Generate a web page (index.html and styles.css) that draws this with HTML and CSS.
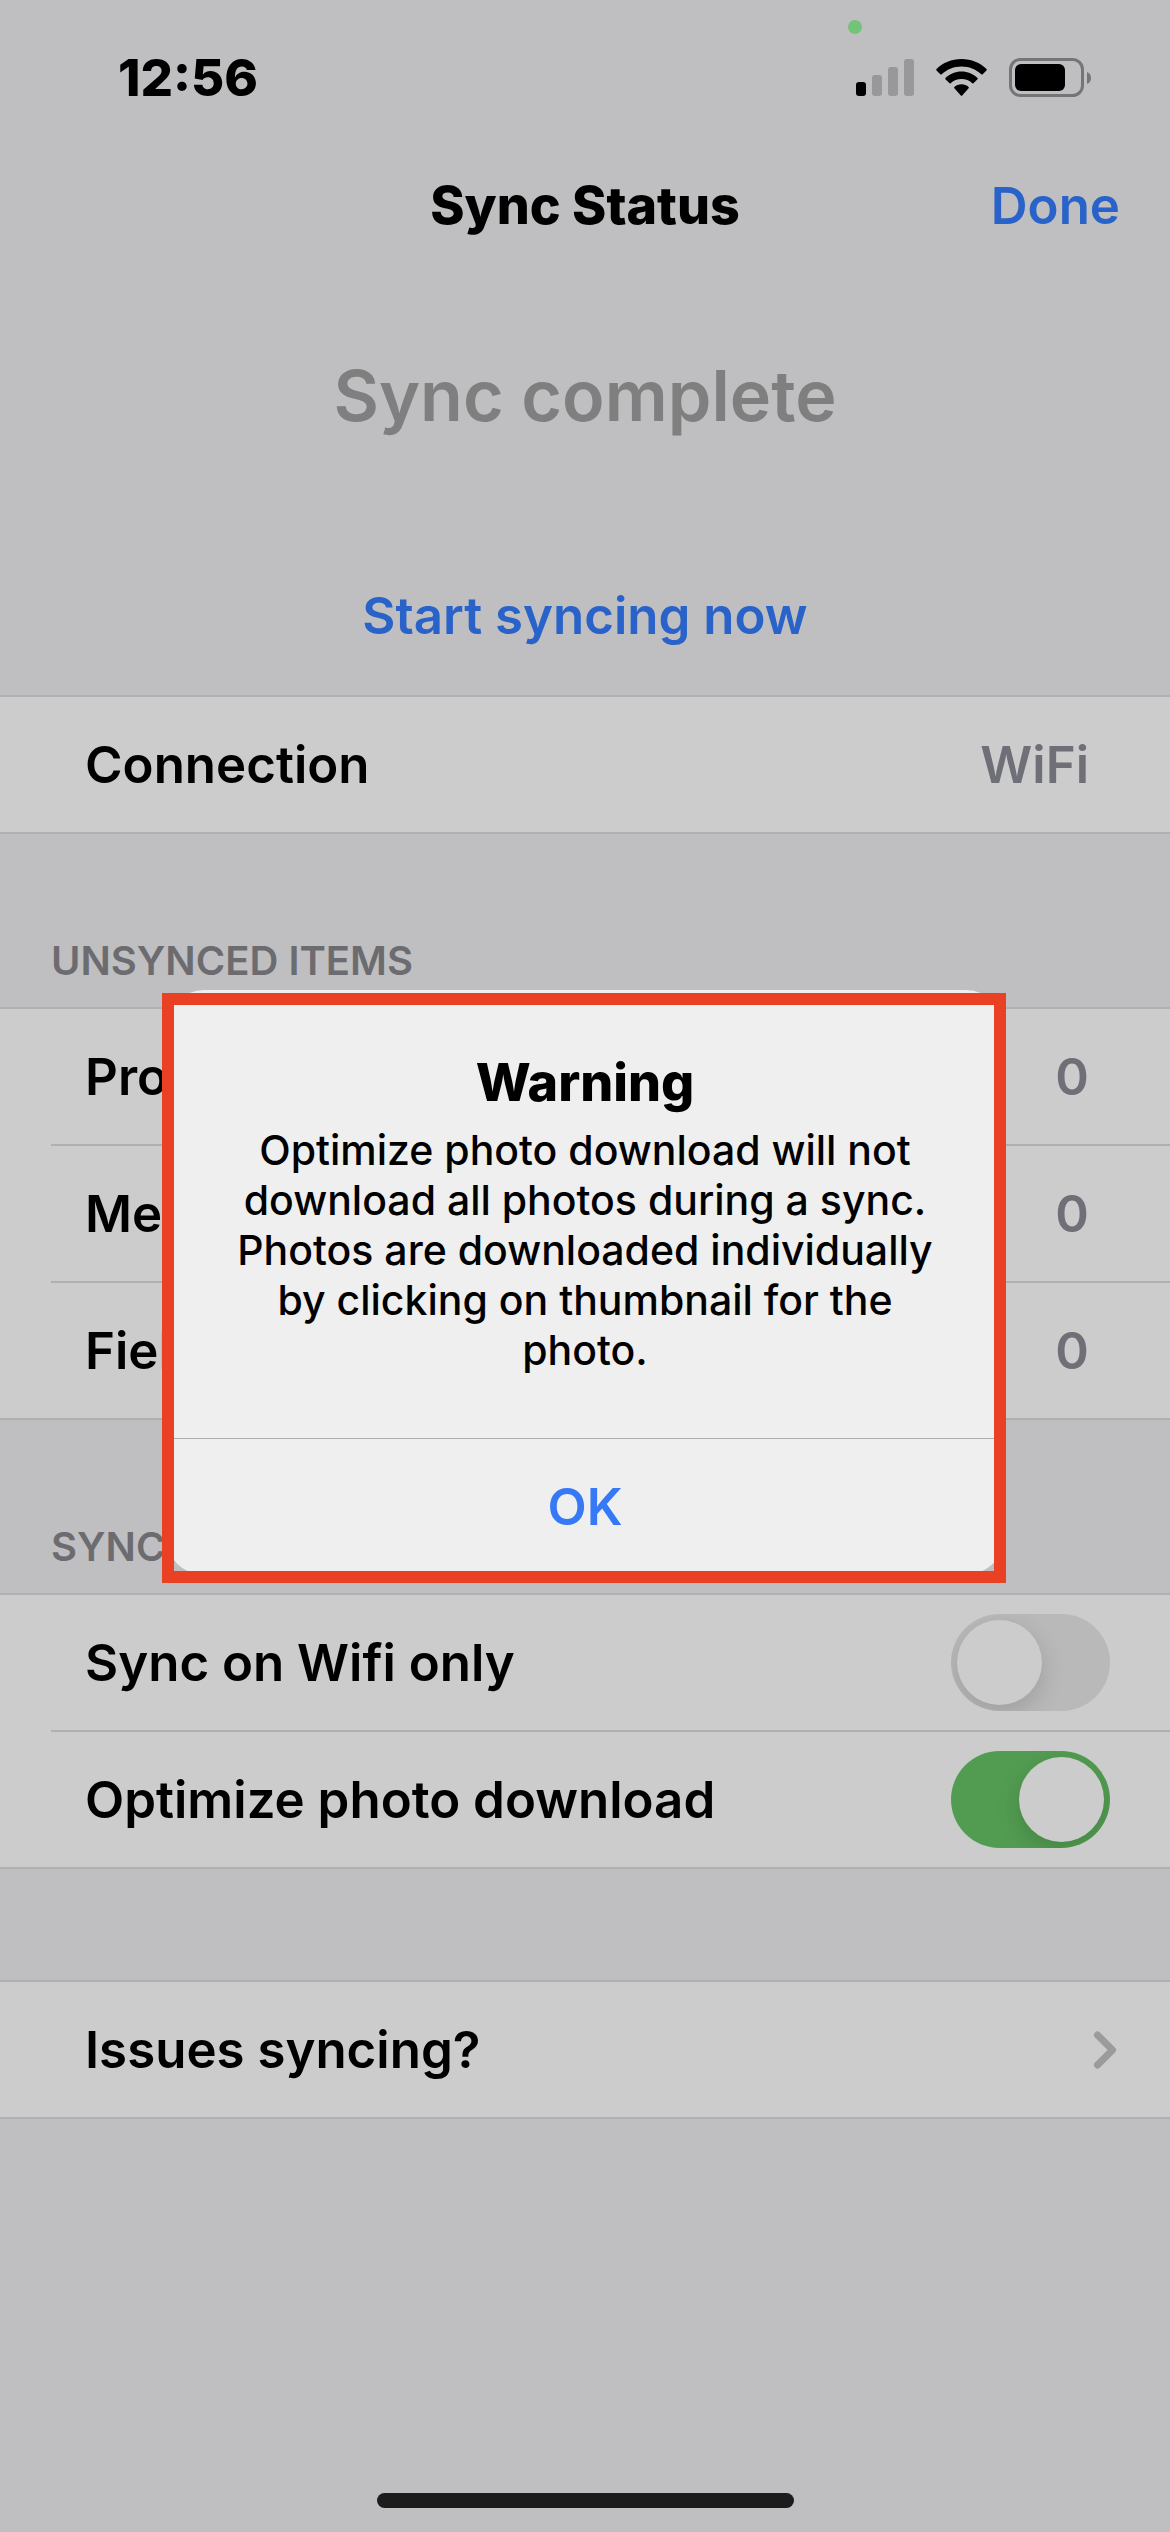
FILE: index.html
```html
<!DOCTYPE html>
<html lang="en">
<head>
<meta charset="utf-8">
<meta name="viewport" content="width=device-width, initial-scale=1">
<title>Sync Status</title>
<link rel="stylesheet" href="styles.css">
</head>
<body>
<div class="screen">
  <header class="status-bar">
    <time class="clock">12:56</time>
    <svg class="status-icons" width="246" height="86" viewBox="846 15 246 86" aria-hidden="true">
      <circle cx="855" cy="27" r="7" fill="#72c47b"/>
      <rect x="856" y="82" width="10" height="14" rx="3"/>
      <g fill="#98989a">
        <rect x="872" y="75" width="10" height="21" rx="3"/>
        <rect x="888" y="67" width="10" height="29" rx="3"/>
        <rect x="904" y="59" width="10" height="37" rx="3"/>
      </g>
      <path d="M961.500 59C951.500 59 943 62.700 936.500 69.100Q935.900 69.700 936.500 70.400L940.300 74.200Q941 74.800 941.700 74.200C947.300 69.200 954 66.500 961.500 66.500S975.700 69.200 981.300 74.200Q982 74.800 982.700 74.200L986.500 70.400Q987.100 69.700 986.500 69.100C980 62.700 971.500 59 961.500 59Z"/>
      <path d="M961.500 71.500C955.200 71.500 949.800 73.900 945.500 78Q944.900 78.600 945.500 79.300L949.300 83.100Q950 83.800 950.700 83.200C953.700 80.500 957.300 79.100 961.500 79.100S969.300 80.500 972.300 83.200Q973 83.800 973.700 83.100L977.500 79.300Q978.100 78.600 977.500 78C973.200 73.900 967.800 71.500 961.500 71.500Z"/>
      <path d="M961.500 84.200C958.700 84.200 956.300 85.200 954.400 86.900Q953.700 87.600 954.400 88.300L960.800 95.400Q961.500 96.200 962.200 95.400L968.600 88.300Q969.300 87.600 968.600 86.900C966.700 85.200 964.300 84.200 961.500 84.200Z"/>
      <rect x="1010.500" y="59.500" width="72" height="36" rx="10" fill="none" stroke="#757577" stroke-width="3"/>
      <rect x="1015" y="64" width="50" height="27" rx="6"/>
      <path d="M1087 72Q1091 73.500 1091 78T1087 84Z" fill="#757577"/>
    </svg>
  </header>

  <nav class="nav-bar">
    <h1 class="nav-title">Sync Status</h1>
    <button class="link-button" type="button">Done</button>
  </nav>

  <main>
    <section class="summary">
      <p class="summary-state">Sync complete</p>
      <button class="link-button" type="button">Start syncing now</button>
    </section>

    <section class="group">
      <dl class="rows">
        <div class="row"><dt>Connection</dt><dd>WiFi</dd></div>
      </dl>
    </section>

    <section class="group">
      <h2 class="group-title">UNSYNCED ITEMS</h2>
      <dl class="rows">
        <div class="row"><dt>Projects</dt><dd>0</dd></div>
        <div class="row"><dt>Media</dt><dd>0</dd></div>
        <div class="row"><dt>Fields</dt><dd>0</dd></div>
      </dl>
    </section>

    <section class="group">
      <h2 class="group-title">SYNC</h2>
      <div class="rows">
        <label class="row row-switch">Sync on Wifi only<input class="switch" type="checkbox" role="switch"></label>
        <label class="row row-switch">Optimize photo download<input class="switch" type="checkbox" role="switch" checked></label>
      </div>
    </section>

    <section class="group group-plain">
      <div class="rows">
        <a class="row row-link" href="#issues">Issues syncing?
          <svg width="24" height="40" viewBox="0 0 24 40" fill="none" stroke="#9b9b9d" stroke-width="7" stroke-linecap="round" stroke-linejoin="round" aria-hidden="true"><path d="M4.500 5L19.500 20L4.500 35"/></svg>
        </a>
      </div>
    </section>
  </main>

  <footer class="home"><span class="home-bar"></span></footer>
</div>

<div class="overlay">
  <dialog class="alert" open aria-labelledby="alert-title" aria-describedby="alert-text">
    <div class="alert-body">
      <h2 class="alert-title" id="alert-title">Warning</h2>
      <p class="alert-text" id="alert-text">Optimize photo download will not download all photos during a sync. Photos are downloaded individually by clicking on thumbnail for the photo.</p>
    </div>
    <button class="alert-action" type="button">OK</button>
  </dialog>
</div>
</body>
</html>
```
FILE: styles.css
```css
* {
  box-sizing: border-box;
}

body,
h1,
h2,
p,
dl,
dd {
  margin: 0;
}

body {
  background: #bfbfc1;
  color: #000;
  font-family: Inter, "Liberation Sans", sans-serif;
  font-size: 51px;
  font-weight: 600;
  line-height: 64px;
}

button {
  border: 0;
  padding: 0;
  background: none;
  font: inherit;
  cursor: pointer;
}

.screen {
  display: flex;
  flex-direction: column;
  min-height: 100vh;
}

.status-bar {
  display: flex;
  justify-content: space-between;
  align-items: flex-end;
  padding: 15px 78px 0 118px;
}

.clock {
  font-weight: 800;
  line-height: 46px;
}

.status-icons {
  display: block;
}

.nav-bar {
  display: grid;
  grid-template-columns: 1fr auto 1fr;
  align-items: center;
  padding: 73px 50px 0;
}

.nav-title {
  grid-column: 2;
  font-size: 52px;
  font-weight: 800;
}

.nav-bar .link-button {
  justify-self: end;
}

.link-button {
  color: #2963c9;
}

.summary {
  display: flex;
  flex-direction: column;
  align-items: center;
  gap: 142px;
  padding: 112px 48px 47px;
}

.summary-state {
  color: #7f7f80;
  font-size: 70px;
  line-height: 92px;
}

.group-title {
  padding: 102px 51px 21px;
  color: #6c6c70;
  font-size: 40px;
  font-weight: 600;
  line-height: 50px;
}

.group-plain {
  padding-top: 111px;
}

.rows {
  border: solid #b0b0b1;
  border-width: 2px 0;
  background: #ccc;
}

.row {
  display: flex;
  justify-content: space-between;
  align-items: center;
  height: 135px;
  padding: 0 81px 0 85px;
}

.row + .row {
  height: 137px;
  border-top: 2px solid transparent;
  background: linear-gradient(#b0b0b1, #b0b0b1) 51px 0 / 100% 2px no-repeat border-box;
}

.row dd {
  color: #6f6f77;
}

.row-switch {
  padding-right: 60px;
}

.row-link {
  padding-right: 53px;
  color: inherit;
  text-decoration: none;
}

.switch {
  appearance: none;
  display: flex;
  width: 159px;
  height: 97px;
  margin: 0;
  padding: 6px;
  border-radius: 49px;
  background: #b9b9b9;
  overflow: hidden;
}

.switch::before {
  content: "";
  width: 85px;
  height: 85px;
  border-radius: 50%;
  background: #ccc;
  box-shadow: 0 8px 24px rgb(0 0 0 / 15%);
}

.switch:checked {
  justify-content: flex-end;
  background: #529c51;
}

.home {
  display: flex;
  justify-content: center;
  margin-top: auto;
  padding-bottom: 24px;
}

.home-bar {
  width: 417px;
  height: 15px;
  border-radius: 8px;
  background: #1c1c1c;
}

.overlay {
  position: fixed;
  inset: 0;
  display: flex;
  justify-content: center;
  align-items: center;
  padding-top: 32px;
}

.alert {
  position: relative;
  inset: auto;
  width: 838px;
  margin: 0;
  padding: 0;
  border: 0;
  border-radius: 38px;
  background: #efefef;
  color: #000;
  text-align: center;
}

/* Red frame drawn around the whole alert */
.alert::after {
  content: "";
  position: absolute;
  inset: 3px -2px -8px -4px;
  border: 12px solid #ea4024;
  pointer-events: none;
}

.alert-body {
  padding: 61px 60px 63px;
}

.alert-title {
  font-size: 52px;
  font-weight: 800;
}

.alert-text {
  padding-top: 10px;
  font-size: 41px;
  font-weight: 500;
  line-height: 50px;
}

.alert-action {
  width: 100%;
  height: 137px;
  border-top: 1px solid #aeaeae;
  color: #3579f7;
}
```
